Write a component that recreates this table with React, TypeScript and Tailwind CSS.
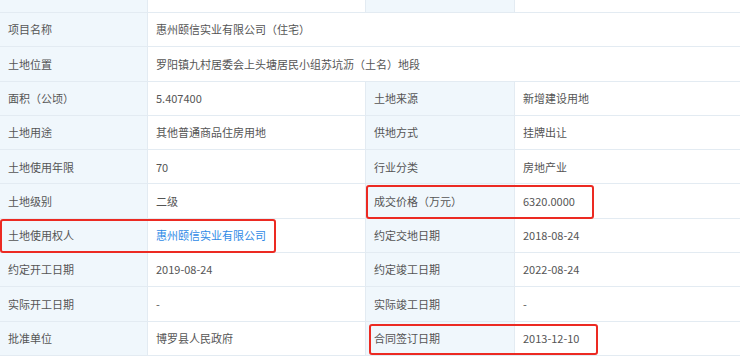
const rows: { cells: [string, string, string?, string?]; link?: boolean }[] = [
  { cells: ['面积（公顷）', '5.407400', '土地来源', '新增建设用地'] },
  { cells: ['土地用途', '其他普通商品住房用地', '供地方式', '挂牌出让'] },
  { cells: ['土地使用年限', '70', '行业分类', '房地产业'] },
  { cells: ['土地级别', '二级', '成交价格（万元）', '6320.0000'] },
  { cells: ['土地使用权人', '惠州颐信实业有限公司', '约定交地日期', '2018-08-24'], link: true },
  { cells: ['约定开工日期', '2019-08-24', '约定竣工日期', '2022-08-24'] },
  { cells: ['实际开工日期', '-', '实际竣工日期', '-'] },
  { cells: ['批准单位', '博罗县人民政府', '合同签订日期', '2013-12-10'] },
];

const label = 'w-[148px] shrink-0 bg-[#f0f7fc] border-r border-[#e3ebf2] px-2 flex items-center';
const value = 'flex items-center px-2 border-r border-[#e3ebf2]';

export default function App() {
  return (
    <div
      className="relative w-[740px] h-[357px] overflow-hidden bg-white text-[11px] text-[#555]"
      style={{ fontFamily: '"Noto Sans CJK SC", "Noto Sans", sans-serif' }}
    >
      {/* partial top row */}
      <div className="flex h-[13px] border-b border-[#e3ebf2]">
        <div className={label} />
        <div className={`${value} w-[218px]`} />
        <div className={label + ' w-[149px]'} />
        <div className="flex-1" />
      </div>

      <div className="flex h-[34.3px] border-b border-[#e3ebf2]">
        <div className={label}>项目名称</div>
        <div className="flex items-center px-2 flex-1">惠州颐信实业有限公司（住宅）</div>
      </div>
      <div className="flex h-[34.3px] border-b border-[#e3ebf2]">
        <div className={label}>土地位置</div>
        <div className="flex items-center px-2 flex-1">罗阳镇九村居委会上头塘居民小组苏坑沥（土名）地段</div>
      </div>

      {rows.map((r) => (
        <div key={r.cells[0]} className="flex h-[34.3px] border-b border-[#e3ebf2]">
          <div className={label}>{r.cells[0]}</div>
          <div className={`${value} w-[218px] ${r.link ? 'text-[#2f8ae6]' : ''}`}>{r.cells[1]}</div>
          <div className={label + ' w-[149px]'}>{r.cells[2]}</div>
          <div className="flex items-center px-2 flex-1">{r.cells[3]}</div>
        </div>
      ))}

      {/* highlight boxes */}
      <div className="absolute left-[366px] top-[185px] w-[228px] h-[34px] border-2 border-[#ec2a22] rounded-[3px]" />
      <div className="absolute left-0 top-[219px] w-[276px] h-[34px] border-2 border-[#ec2a22] rounded-[3px]" />
      <div className="absolute left-[369px] top-[324px] w-[229px] h-[31px] border-2 border-[#ec2a22] rounded-[3px]" />
    </div>
  );
}
